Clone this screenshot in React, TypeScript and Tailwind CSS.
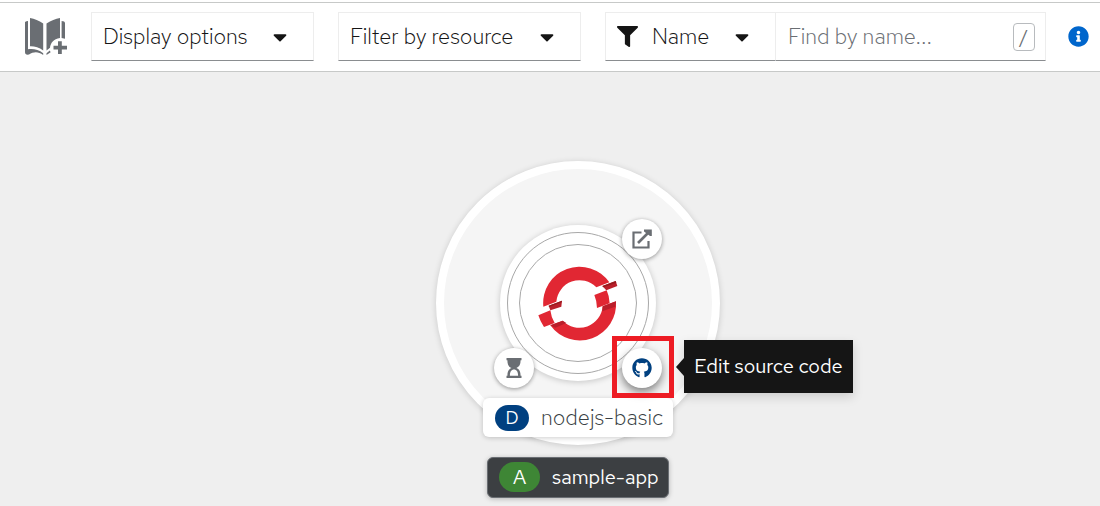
import React from "react";
import { FaCaretDown, FaFilter, FaGithub, FaInfoCircle } from "react-icons/fa";

function CatalogIcon() {
  return (
    <svg viewBox="0 0 44 40" className="h-10 w-11" fill="#6a6e73" aria-hidden="true">
      <path d="M6 1 C10.5 2 15 3.5 19.2 6.5 V33.5 C15 30 10 29 6 29.2 Z" />
      <path d="M36 1 C31.5 2 27 3.5 22.5 6.5 V33.5 L26 30.8 C26.5 26 29.5 22 36 21 Z" />
      <path d="M1 5 Q2.2 4 4 4 V32.2 C8.5 31.6 14.5 32 19.2 36.2 V38 C14 34.2 9.5 34.6 5 37.6 Q1 38.4 1 35 Z" />
      <path d="M37.6 4 Q40.8 4 41 6 V21.8 L37.6 21 Z" />
      <path d="M22.5 36.2 L25.8 33.4 L26.6 35.2 L22.5 38 Z" />
      <path d="M34 24.2 H37.8 V28.8 H43 V32.6 H37.8 V37 H34 V32.6 H29.5 V28.8 H34 Z" />
    </svg>
  );
}

function OpenShiftLogo() {
  return (
    <svg viewBox="0 0 285 270" className="absolute top-[100px] left-[94px] h-[90px] w-[95px]" role="img" aria-label="OpenShift">
      <path fill="#e12733" d="M40 137 A109 109 0 0 1 238 64 L199 79 A70 70 0 0 0 79 122 Z" />
      <path fill="#e12733" d="M258 121 A109 109 0 0 1 61 193 L98 179 A70 70 0 0 0 218 136 Z" />
      <path fill="#e12733" d="M193 102 L230 88 Q238 105 239 127 L201 141 Q200 118 193 102 Z" />
      <path fill="#e12733" d="M25 163 L61 148 Q63 167 74 186 L42 198 Q31 182 25 163 Z" />
      <path fill="#ba1f2b" d="M217 75 L257 60 L262 75 L229 88 Z" />
      <path fill="#961b1e" d="M217 75 L257 60 L259 65 L220 79 Z" />
      <path fill="#ba1f2b" d="M56 134 L96 119 L94 137 L61 148 Z" />
      <path fill="#961b1e" d="M56 134 L96 119 L95 124 L57 138 Z" />
      <path fill="#ba1f2b" d="M218 136 L258 121 Q257 132 255 137 L217 151 Z" />
      <path fill="#ba1f2b" d="M61 193 L98 179 L109 186 L76 200 Z" />
    </svg>
  );
}

function ExternalIcon() {
  return (
    <svg viewBox="0 0 20 20" className="size-5" aria-hidden="true">
      <path d="M9.5 3.5 H1.5 V18.5 H16.5 V12" fill="none" stroke="#6a6e73" strokeWidth="2.2" />
      <path d="M6 14 L16 4" stroke="#6a6e73" strokeWidth="2.6" />
      <path d="M12 0.5 H19.8 V7 H18 L12 2.5 Z" fill="#6a6e73" />
    </svg>
  );
}

function HourglassIcon() {
  return (
    <svg viewBox="0 0 16 20" className="h-5 w-4" fill="#6a6e73" aria-hidden="true">
      <path d="M0.5 0 H15.5 V2.3 H14.6 C14.6 6.5 13.4 8.8 10.4 10 C13.4 11.2 14.6 13.5 14.6 17.7 H15.5 V20 H0.5 V17.7 H1.4 C1.4 13.5 2.6 11.2 5.6 10 C2.6 8.8 1.4 6.5 1.4 2.3 H0.5 Z M3.9 17.7 H12.1 C12.1 13.8 10.6 11.6 8 11.6 C5.4 11.6 3.9 13.8 3.9 17.7 Z" fillRule="evenodd" />
    </svg>
  );
}

const box = "flex h-[49px] items-center border border-[#ededed] border-b-[#8a8d90] bg-white";
const decorator = "absolute flex size-10 items-center justify-center rounded-full bg-white";

export default function App() {
  return (
    <div className="flex min-h-screen flex-col bg-white pt-0.5 font-['Red_Hat_Text','Open_Sans',sans-serif] text-[22px] leading-7 font-light text-[#151515]">
      <header className="flex items-center border-y border-[#c7c9c8] pt-[9px] pb-[10px] pr-[11px] pl-6">
        <button aria-label="Add from catalog" className="mr-[23px] shrink-0">
          <CatalogIcon />
        </button>
        <button className={`${box} mr-6 w-[223px] shrink-0 px-[11px]`}>
          <span className="w-[166px] text-left whitespace-nowrap">Display options</span>
          <FaCaretDown className="size-[22px]" />
        </button>
        <button className={`${box} mr-6 w-[243px] shrink-0 px-[11px]`}>
          <span className="w-[186px] text-left whitespace-nowrap">Filter by resource</span>
          <FaCaretDown className="size-[22px]" />
        </button>
        <div className="flex min-w-0 flex-1">
          <button className={`${box} w-[170px] shrink-0 border-r-0 px-[11px]`}>
            <FaFilter className="mr-[14px] size-[21px] shrink-0" />
            <span className="w-[79px] shrink-0 text-left">Name</span>
            <FaCaretDown className="size-[22px] shrink-0" />
          </button>
          <label className={`${box} min-w-0 flex-1 pr-[10px] pl-3`}>
            <input
              aria-label="Find by name"
              placeholder="Find by name..."
              className="min-w-0 flex-1 bg-transparent outline-none placeholder:text-[#6a6e73]"
            />
            <kbd className="flex h-7 w-[22px] shrink-0 items-center justify-center rounded-sm border border-[#b8bbbe] font-['Red_Hat_Text','Open_Sans',sans-serif] text-lg font-normal text-[#6a6e73]">
              /
            </kbd>
          </label>
        </div>
        <button aria-label="View shortcuts" className="ml-[22px] shrink-0 text-[#0066cc]">
          <FaInfoCircle className="size-[21px]" />
        </button>
      </header>

      <main className="relative min-h-[434px] flex-1 overflow-hidden bg-[#efefef]">
        <div className="absolute top-[89px] left-[436px] size-[284px]">
          <div className="size-full rounded-full border-8 border-white bg-[#f5f5f5] shadow-[0_1px_6px_rgba(3,3,3,0.16)]" />
          <div className="absolute top-16 left-16 flex size-[156px] items-center justify-center rounded-full bg-white shadow-[0_1px_6px_rgba(3,3,3,0.2)]">
            <div className="flex size-[142px] items-center justify-center rounded-full border border-[#a8a8a8]">
              <div className="size-[118px] rounded-full border border-[#a8a8a8]" />
            </div>
          </div>
          <OpenShiftLogo />
          <a href="#open" aria-label="Open URL" className={`${decorator} top-[58px] left-[186px] shadow-[0_1px_4px_rgba(3,3,3,0.4)]`}>
            <ExternalIcon />
          </a>
          <button aria-label="Build pending" className={`${decorator} top-[187px] left-[58px] shadow-[0_1px_4px_rgba(3,3,3,0.4)]`}>
            <HourglassIcon />
          </button>
          <button className="absolute top-[237px] left-[47px] flex h-[39px] w-[190px] items-center rounded-md bg-white pl-3 whitespace-nowrap text-[#393f44] shadow-[0_1px_5px_rgba(3,3,3,0.2)]">
            <span className="mr-3 flex h-[26px] w-[34px] shrink-0 items-center justify-center rounded-full bg-[#004080] text-lg font-normal text-white">D</span>
            nodejs-basic
          </button>
          <a href="#edit" aria-label="Edit source code" className={`${decorator} top-[187px] left-[186px] text-[#004080] shadow-[0_4px_10px_rgba(3,3,3,0.5)]`}>
            <FaGithub className="size-5" />
          </a>
          <div className="absolute top-[175px] left-[176px] size-[62px] border-[5px] border-[#ed1c24]" />
          <div role="tooltip" className="absolute top-[179px] left-[248px] flex h-[53px] w-[169px] items-center justify-center bg-[#151515] pb-0.5 text-xl font-normal whitespace-nowrap text-white shadow-[0_4px_10px_rgba(3,3,3,0.15)]">
            <svg viewBox="0 0 8 18" className="absolute top-[18px] -left-2 h-[18px] w-2" aria-hidden="true">
              <path d="M0 9 L8 0 V18 Z" fill="#151515" />
            </svg>
            Edit source code
          </div>
          <button className="absolute top-[296px] left-[51px] flex h-[41px] w-[182px] items-center rounded-md border border-[#6a6e73] bg-[#3c3f42] pb-px pl-[11px] text-xl font-normal whitespace-nowrap text-white shadow-[0_1px_5px_rgba(3,3,3,0.25)]">
            <span className="mr-3 flex h-[30px] w-[41px] shrink-0 items-center justify-center rounded-full bg-[#3e8635]">A</span>
            sample-app
          </button>
        </div>
      </main>
    </div>
  );
}
